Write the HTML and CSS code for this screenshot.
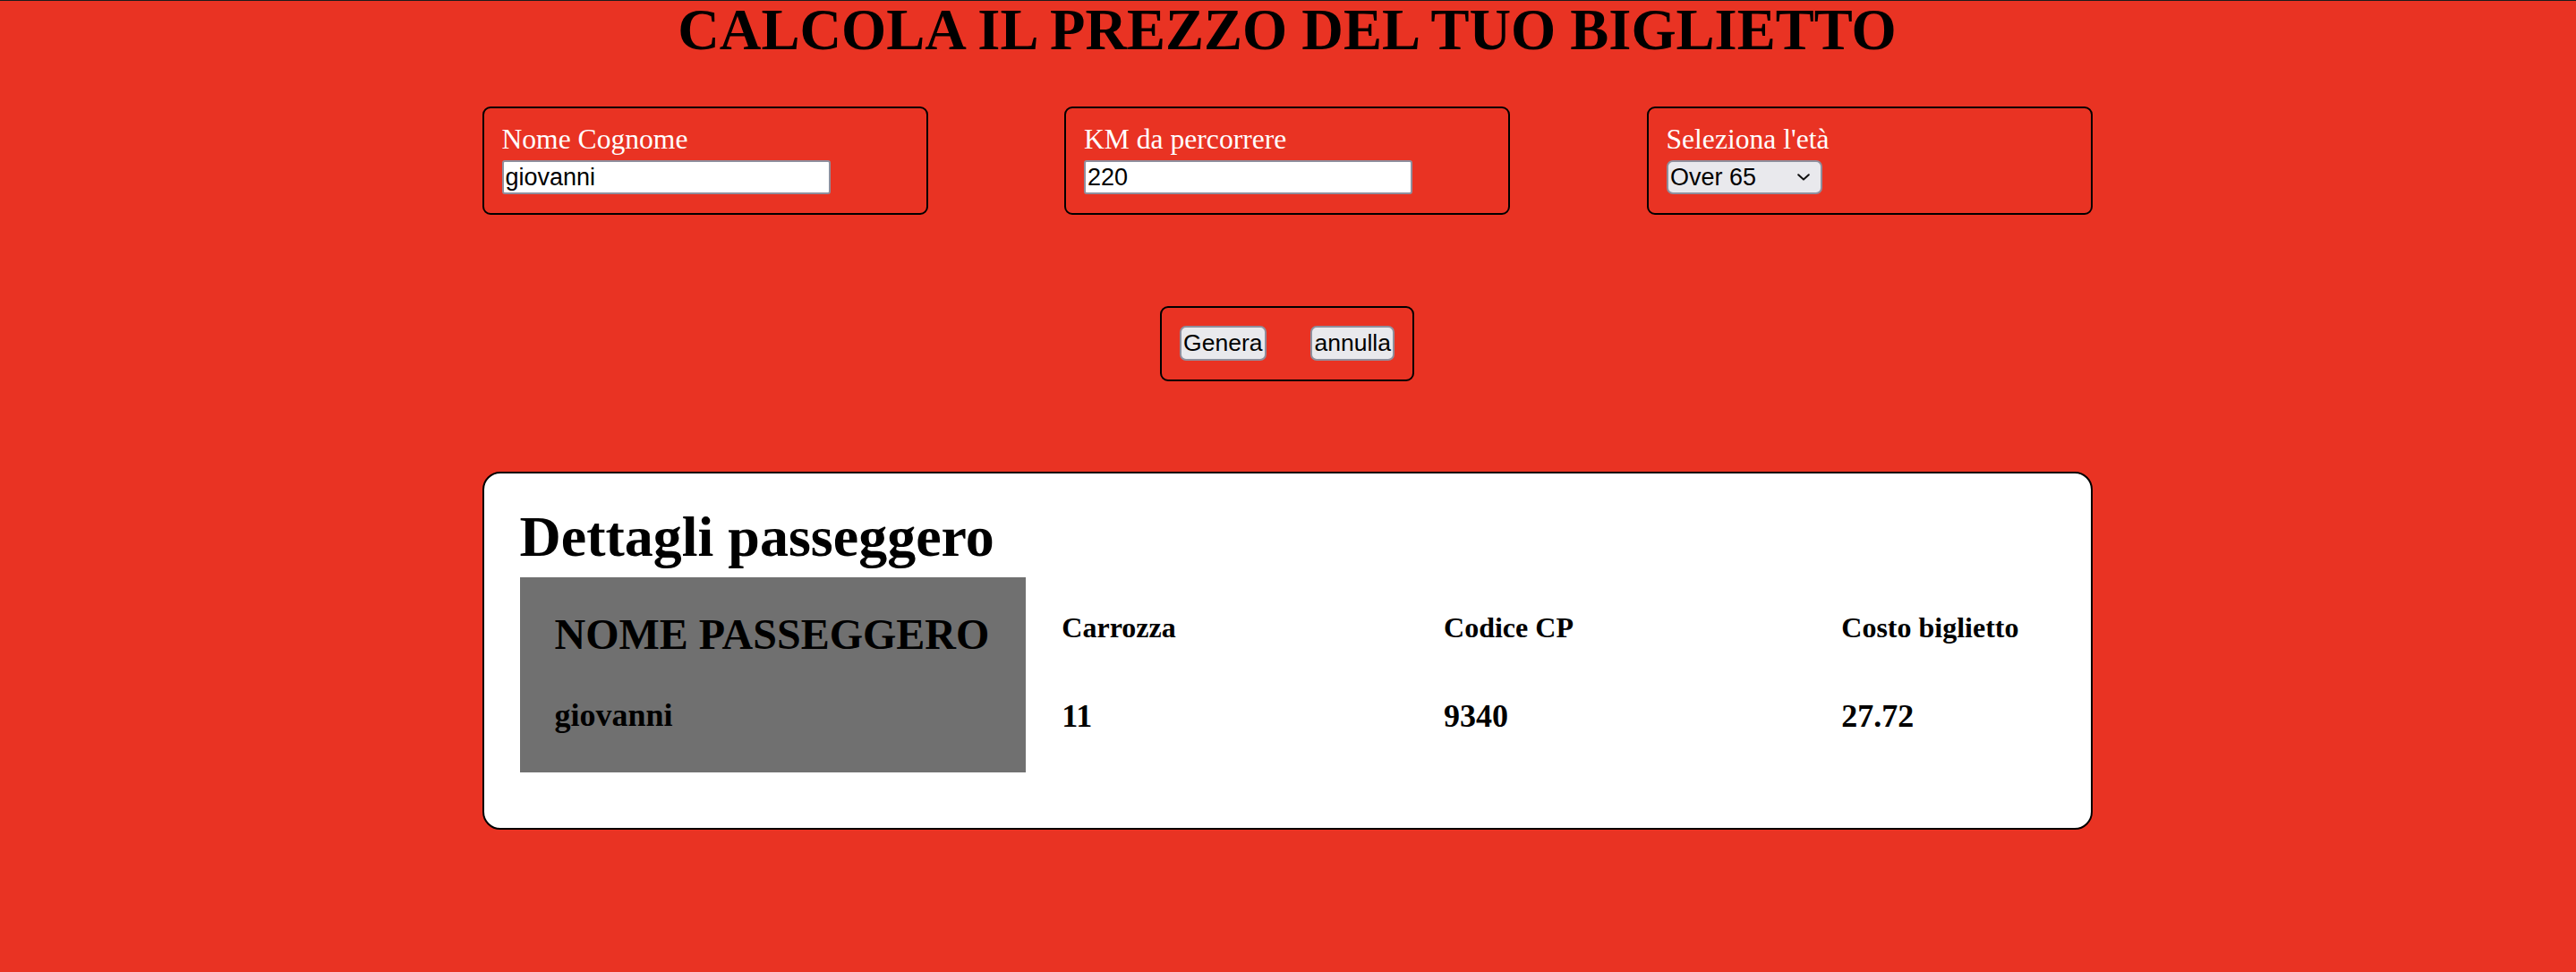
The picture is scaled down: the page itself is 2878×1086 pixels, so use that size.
FILE: index.html
```html
<!DOCTYPE html>
<html lang="it">
<head>
<meta charset="utf-8">
<title>Calcola il prezzo del tuo biglietto</title>
<link rel="stylesheet" href="styles.css">
</head>
<body>
<h1 class="title">CALCOLA IL PREZZO DEL TUO BIGLIETTO</h1>
<main class="wrap">
  <section class="fields">
    <div class="field">
      <label class="field-label" for="nome">Nome Cognome</label>
      <input class="text-input" id="nome" type="text" value="giovanni">
    </div>
    <div class="field">
      <label class="field-label" for="km">KM da percorrere</label>
      <input class="text-input" id="km" type="text" value="220">
    </div>
    <div class="field">
      <label class="field-label" for="eta">Seleziona l'età</label>
      <div class="select-wrap">
        <select class="select" id="eta">
          <option>Minorenne</option>
          <option>Maggiorenne</option>
          <option selected>Over 65</option>
        </select>
        <svg class="chevron" viewBox="0 0 14 8" width="14" height="8" aria-hidden="true">
          <path d="M1.2 1.2 L7 6.6 L12.8 1.2" fill="none" stroke="#111" stroke-width="2" stroke-linecap="round" stroke-linejoin="round"/>
        </svg>
      </div>
    </div>
  </section>

  <div class="actions">
    <button class="btn" type="button">Genera</button>
    <button class="btn" type="button">annulla</button>
  </div>

  <section class="ticket">
    <h2 class="ticket-title">Dettagli passeggero</h2>
    <div class="ticket-row">
      <div class="name-col">
        <div class="name-head">NOME PASSEGGERO</div>
        <div class="cell-val">giovanni</div>
      </div>
      <div class="cols">
        <div class="col">
          <div class="cell-head">Carrozza</div>
          <div class="cell-val">11</div>
        </div>
        <div class="col">
          <div class="cell-head">Codice CP</div>
          <div class="cell-val">9340</div>
        </div>
        <div class="col">
          <div class="cell-head">Costo biglietto</div>
          <div class="cell-val">27.72</div>
        </div>
      </div>
    </div>
  </section>
</main>
</body>
</html>
```

FILE: styles.css
```css
html, body {
  margin: 0;
  padding: 0;
}

body {
  background: #e93323;
  border-top: 1px solid #1c1c1c;
  padding-right: 2px;
  min-height: 1085px;
  font-family: "Liberation Serif", "Times New Roman", serif;
  color: #000;
}

.title {
  margin: 0;
  font-size: 64.5px;
  line-height: 66px;
  font-weight: bold;
  text-align: center;
}

.wrap {
  width: 1799px;
  margin: 52px auto 0;
  display: flex;
  flex-direction: column;
  align-items: center;
  gap: 101.5px;
}

.fields {
  width: 100%;
  display: flex;
  justify-content: space-between;
}

.field {
  box-sizing: border-box;
  width: 498px;
  border: 2px solid #000;
  border-radius: 9px;
  padding: 17.5px 20px 21px;
  display: flex;
  flex-direction: column;
  align-items: flex-start;
}

.field-label {
  color: #fff;
  font-size: 31.6px;
  line-height: 34px;
  margin-bottom: 6.5px;
}

.text-input {
  box-sizing: border-box;
  width: 367px;
  height: 38px;
  margin: 0;
  border: 2px solid #8f8f9d;
  border-radius: 3px;
  padding: 0 2px;
  background: #fff;
  color: #000;
  font-family: "Liberation Sans", Arial, sans-serif;
  font-size: 27px;
  outline: none;
}

.select-wrap {
  position: relative;
  display: inline-block;
}

.select {
  box-sizing: border-box;
  -webkit-appearance: none;
  appearance: none;
  width: 174px;
  height: 38px;
  margin: 0;
  border: 2px solid #8f8f9d;
  border-radius: 7px;
  padding: 0 2.5px;
  background: #e9e9ed;
  color: #000;
  font-family: "Liberation Sans", Arial, sans-serif;
  font-size: 27px;
  display: block;
}

.chevron {
  position: absolute;
  right: 14px;
  top: 15px;
  pointer-events: none;
}

.actions {
  display: flex;
  gap: 49px;
  border: 2px solid #000;
  border-radius: 9px;
  padding: 20px 20px 21px;
}

.btn {
  box-sizing: border-box;
  height: 39px;
  margin: 0;
  padding: 0 2.5px;
  border: 2px solid #8f8f9d;
  border-radius: 7px;
  background: #e9e9ed;
  color: #000;
  font-family: "Liberation Sans", Arial, sans-serif;
  font-size: 26.5px;
  line-height: 35px;
}

.ticket {
  box-sizing: border-box;
  width: 100%;
  background: #fff;
  border: 2px solid #000;
  border-radius: 20px;
  padding: 34px 40px 62px;
}

.ticket-title {
  margin: 0 0 8px;
  font-size: 64px;
  line-height: 74px;
  font-weight: bold;
}

.ticket-row {
  display: flex;
  align-items: flex-start;
}

.name-col {
  background: #707070;
  padding: 36px 41px 43px 39px;
}

.name-head {
  font-size: 48px;
  line-height: 55px;
  font-weight: bold;
  white-space: nowrap;
}

.name-col .cell-val {
  margin-top: 43px;
}

.cell-val {
  font-size: 36px;
  line-height: 41px;
  font-weight: bold;
}

.cols {
  flex: 1;
  display: flex;
  justify-content: space-between;
}

.col {
  padding: 38px 40px 0;
}

.cell-head {
  font-size: 32px;
  line-height: 37px;
  font-weight: bold;
  white-space: nowrap;
}

.col .cell-val {
  margin-top: 60px;
}
```
